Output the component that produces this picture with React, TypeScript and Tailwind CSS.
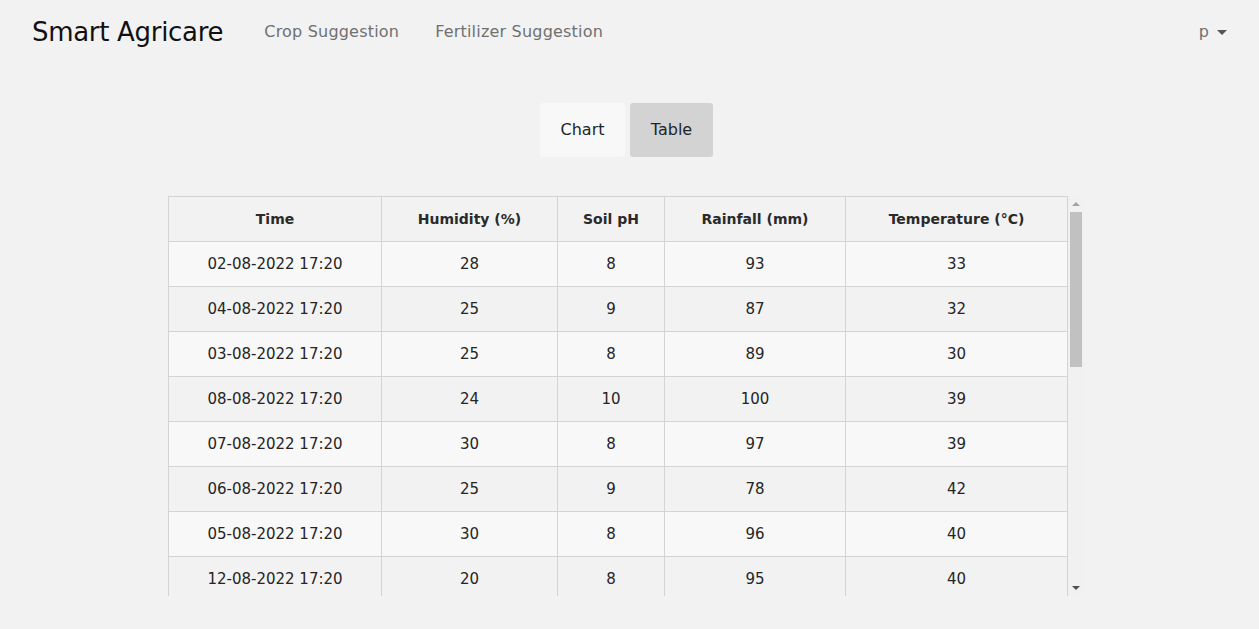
const ROWS = [
  ["02-08-2022 17:20", 28, 8, 93, 33],
  ["04-08-2022 17:20", 25, 9, 87, 32],
  ["03-08-2022 17:20", 25, 8, 89, 30],
  ["08-08-2022 17:20", 24, 10, 100, 39],
  ["07-08-2022 17:20", 30, 8, 97, 39],
  ["06-08-2022 17:20", 25, 9, 78, 42],
  ["05-08-2022 17:20", 30, 8, 96, 40],
  ["12-08-2022 17:20", 20, 8, 95, 40],
  ["11-08-2022 17:20", 27, 9, 91, 37],
  ["10-08-2022 17:20", 26, 8, 88, 35],
  ["09-08-2022 17:20", 29, 7, 94, 36],
  ["13-08-2022 17:20", 22, 8, 90, 38],
  ["14-08-2022 17:20", 24, 9, 85, 41],
  ["15-08-2022 17:20", 28, 8, 99, 34],
  ["16-08-2022 17:20", 31, 10, 92, 33],
  ["17-08-2022 17:20", 26, 8, 86, 37],
  ["18-08-2022 17:20", 23, 9, 98, 39],
  ["19-08-2022 17:20", 27, 8, 93, 40],
  ["20-08-2022 17:20", 25, 8, 89, 36],
  ["21-08-2022 17:20", 29, 9, 95, 38],
];

const HEADERS = [
  { label: "Time", w: "w-[213px]" },
  { label: "Humidity (%)", w: "w-[176px]" },
  { label: "Soil pH", w: "w-[107px]" },
  { label: "Rainfall (mm)", w: "w-[181px]" },
  { label: "Temperature (°C)", w: "" },
];

export default function App() {
  return (
    <div className="min-h-[629px] bg-[#f2f2f2] font-['DejaVu_Sans',sans-serif] text-[#252525]">
      <header className="flex items-center h-[64px] pl-[32px] pr-[32px]">
        <div className="text-[26px] text-[#111] tracking-[-0.3px] mr-[41px]">
          Smart Agricare
        </div>
        <nav className="flex gap-[36px] text-[16px] tracking-[0.2px] text-[#707070]">
          <a>Crop Suggestion</a>
          <a>Fertilizer Suggestion</a>
        </nav>
        <div className="ml-auto flex items-center gap-[8px] text-[16px] text-[#707070]">
          <span>p</span>
          <span className="w-0 h-0 border-l-[5px] border-r-[5px] border-t-[5px] border-l-transparent border-r-transparent border-t-[#555]" />
        </div>
      </header>

      <div className="flex justify-center gap-[5px] mt-[39px] mr-[6px]">
        <button className="w-[85px] h-[54px] bg-[#f8f8f8] rounded-[3px] text-[16px] text-[#212529]">Chart</button>
        <button className="w-[83px] h-[54px] bg-[#d3d3d3] rounded-[3px] text-[16px] text-[#212529]">Table</button>
      </div>

      <div className="flex justify-center mt-[39px] mr-[7px]">
        <div className="relative w-[916px] h-[400px]">
          <div className="w-[916px] h-[400px] overflow-y-scroll [scrollbar-width:none] [&::-webkit-scrollbar]:hidden">
            <table className="w-[900px] border-collapse text-[15px] text-center">
              <thead>
                <tr className="h-[45px] bg-[#f2f2f2]">
                  {HEADERS.map((h) => (
                    <th key={h.label} className={`${h.w} border border-[#d4d4d4] font-bold text-[14px] text-[#2a2a2a]`}>
                      {h.label}
                    </th>
                  ))}
                </tr>
              </thead>
              <tbody>
                {ROWS.map((r, i) => (
                  <tr key={i} className={`h-[45px] ${i % 2 === 0 ? "bg-[#f8f8f8]" : "bg-[#f2f2f2]"}`}>
                    {r.map((c, j) => (
                      <td key={j} className="border border-[#d4d4d4]">
                        {c}
                      </td>
                    ))}
                  </tr>
                ))}
              </tbody>
            </table>
          </div>
          {/* scrollbar */}
          <div className="absolute right-0 top-0 w-[16px] h-[400px] bg-[#f1f1f1] flex flex-col items-center">
            <div className="h-[16px] flex items-center justify-center">
              <span className="w-0 h-0 border-l-[4px] border-r-[4px] border-b-[4px] border-l-transparent border-r-transparent border-b-[#a3a3a3]" />
            </div>
            <div className="w-[12px] h-[155px] bg-[#c1c1c1]" />
            <div className="mt-auto h-[16px] flex items-center justify-center">
              <span className="w-0 h-0 border-l-[4px] border-r-[4px] border-t-[4px] border-l-transparent border-r-transparent border-t-[#505050]" />
            </div>
          </div>
        </div>
      </div>
    </div>
  );
}
